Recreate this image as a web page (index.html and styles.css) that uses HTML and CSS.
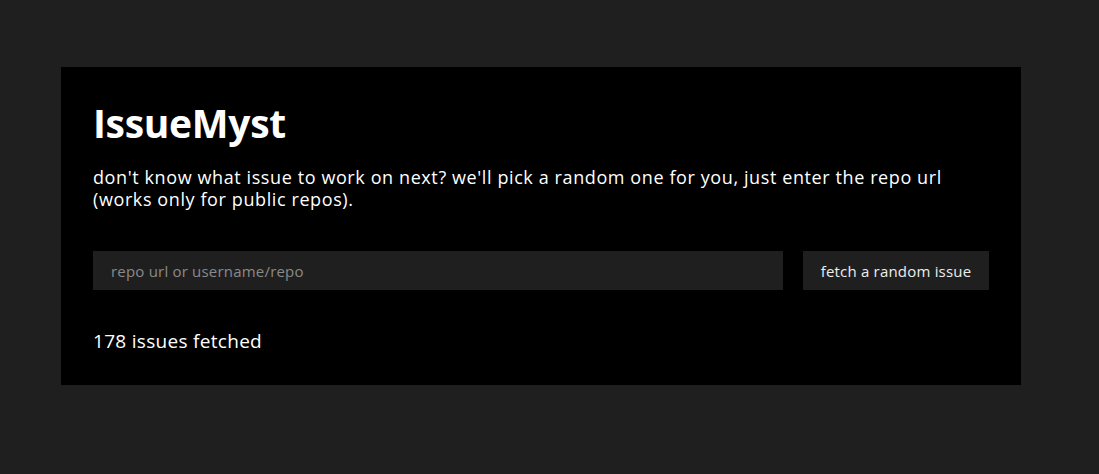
FILE: index.html
```html
<!DOCTYPE html>
<html>
<head>
<meta charset="utf-8">
<title>IssueMyst</title>
<link rel="stylesheet" href="styles.css">
</head>
<body>
<main class="card">
  <h1 class="title">IssueMyst</h1>
  <p class="lead">don't know what issue to work on next? we'll pick a random one for you, just enter the repo url (works only for public repos).</p>
  <form class="row">
    <input class="repo" type="text" placeholder="repo url or username/repo">
    <button class="fetch" type="button">fetch a random issue</button>
  </form>
  <p class="status">178 issues fetched</p>
</main>
</body>
</html>
```
FILE: styles.css
```css
html, body {
  margin: 0;
  padding: 0;
  background: #1f1f1f;
  color: #ffffff;
  font-family: "Open Sans", "Noto Sans", sans-serif;
}
body {
  padding: 67px 78px 0 61px;
}
.card {
  width: 960px;
  box-sizing: border-box;
  background: #000000;
  padding: 30px 32px 32px 32px;
}
.title {
  margin: 0;
  font-size: 39px;
  line-height: 52px;
  font-weight: 700;
  letter-spacing: -0.3px;
}
.lead {
  margin: 17px 0 0 0;
  font-size: 18px;
  line-height: 22px;
  letter-spacing: 0.6px;
  max-width: 870px;
}
.row {
  display: flex;
  gap: 20px;
  margin-top: 41px;
}
.repo {
  flex: 1;
  height: 39px;
  box-sizing: border-box;
  border: none;
  outline: none;
  background: #1f1f1f;
  color: #ddd;
  padding: 0 18px;
  font-family: inherit;
  font-size: 15px;
  letter-spacing: 0.2px;
}
.repo::placeholder {
  color: #8a8a8a;
}
.fetch {
  width: 186px;
  height: 39px;
  border: none;
  background: #1f1f1f;
  color: #eeeeee;
  font-family: inherit;
  font-size: 15px;
  letter-spacing: 0.2px;
  padding: 0;
}
.status {
  margin: 39px 0 0 0;
  font-size: 19px;
  line-height: 24px;
  letter-spacing: 0.3px;
}
```
